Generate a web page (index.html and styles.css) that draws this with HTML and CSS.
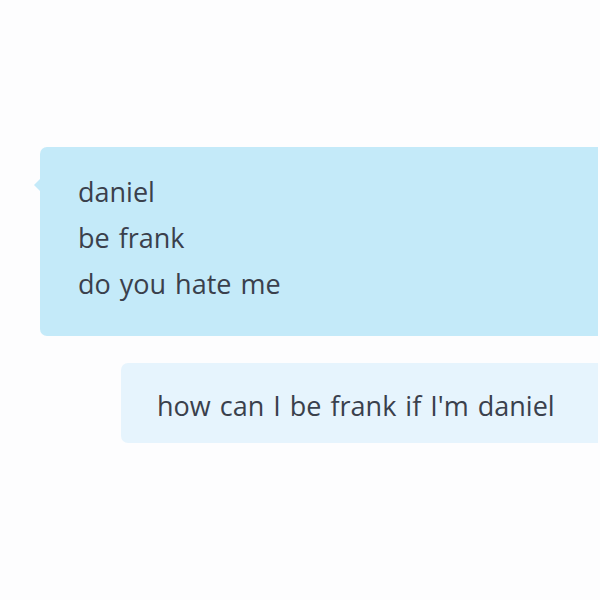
FILE: index.html
```html
<!DOCTYPE html>
<html>
  <head>
    <title>Chat</title>
    <meta name="viewport" content="width=device-width, initial-scale=1">
    <link rel="stylesheet" href="styles.css">
  </head>
  <body>
    <div class="chat">
      <div class="bubble incoming">
        <p>daniel</p>
        <p>be frank</p>
        <p>do you hate me</p>
      </div>
      <div class="bubble outgoing">
        <p>how can I be frank if I'm daniel</p>
      </div>
    </div>
  </body>
</html>
```

FILE: styles.css
```css
body {
  margin: 0;
  background-color: #fdfdfe;
  font-family: "Open Sans", "Noto Sans", sans-serif;
  color: #3a404c;
}

.chat {
  display: flex;
  flex-direction: column;
  gap: 27px;
  padding-top: 147px;
}

.bubble p {
  margin: 0;
  font-size: 27px;
  line-height: 46px;
  word-spacing: 2px;
}

.bubble {
  position: relative;
  margin-right: 2px;
  border-radius: 7px 0 0 7px;
}

.incoming {
  margin-left: 40px;
  background-color: #c4eaf9;
  padding: 22px 38px 29px;
}

/* little tail on the left */
.incoming::before {
  content: "";
  position: absolute;
  left: -6px;
  top: 32px;
  border-top: 6px solid transparent;
  border-bottom: 6px solid transparent;
  border-right: 6px solid #c4eaf9;
}

.outgoing {
  margin-left: 121px;
  background-color: #e6f4fd;
  padding: 20px 36px 14px;
}
```
